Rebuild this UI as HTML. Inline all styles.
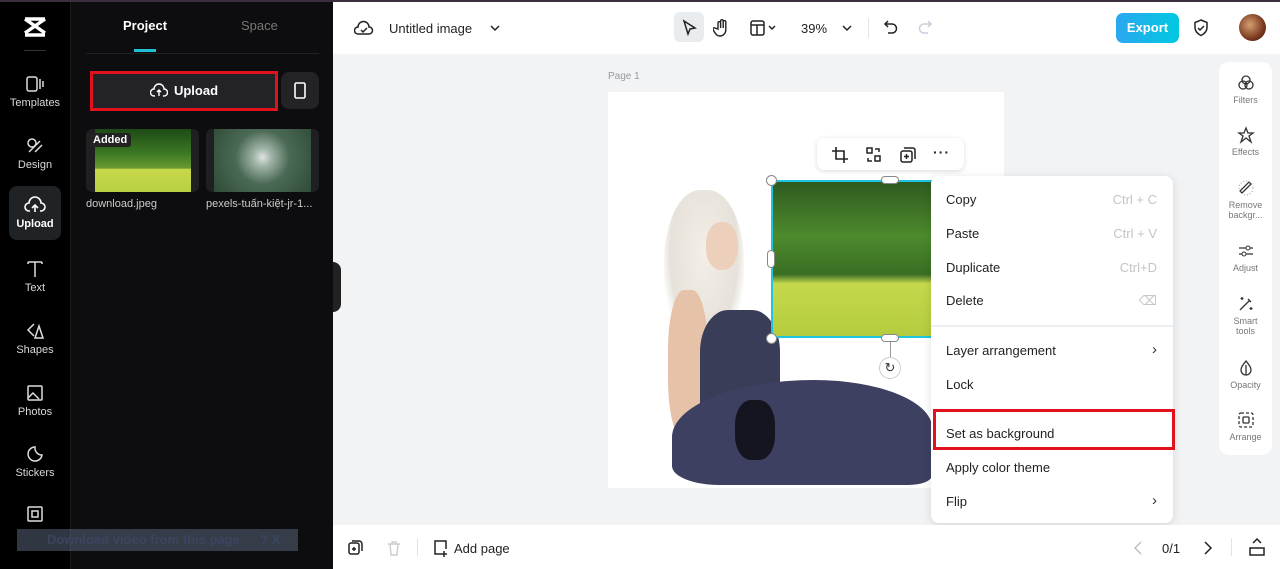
<!DOCTYPE html>
<html><head><meta charset="utf-8"><style>
*{margin:0;padding:0;box-sizing:border-box}
body{width:1280px;height:569px;overflow:hidden;font-family:"Liberation Sans",sans-serif;background:#f1f3f5;position:relative}
.a{position:absolute}
.rail{left:0;top:0;width:71px;height:569px;background:#000;border-right:1px solid #1c1c1e}
.ri{position:absolute;left:0;width:70px;text-align:center;color:#d8d8d8;font-size:11px}
.ri svg{display:block;margin:0 auto 3px}
.panel{left:71px;top:0;width:262px;height:569px;background:#0d0d0f}
.menu{left:931px;top:176px;width:242px;height:347px;background:#fff;border-radius:8px;box-shadow:0 2px 10px rgba(0,0,0,.12)}
.mi{position:absolute;left:15px;font-size:13px;color:#222}
.sc{position:absolute;right:16px;font-size:13px;color:#c4c4c4}
.rp{left:1219px;top:62px;width:53px;height:393px;background:#fff;border-radius:10px}
.rt{position:absolute;left:0;width:53px;text-align:center;font-size:9px;color:#777;line-height:10px}
.rt svg{display:block;margin:0 auto 3px}
</style></head><body>
<div class="a" style="left:0;top:0;width:1280px;height:2px;background:#3b2f3f;z-index:5"></div>
<div class="a rail">
 <div class="ri" style="top:16px"><svg width="26" height="22" viewBox="0 0 26 22"><path d="M3 3 L23 17 M23 3 L3 17 M3 3h20M3 19h20" stroke="#fff" stroke-width="3.5" fill="none"/></svg></div>
 <div class="a" style="left:24px;top:50px;width:22px;height:1px;background:#333"></div>
 <div class="ri" style="top:74px"><svg width="20" height="20"><rect x="2" y="3" width="10" height="14" rx="2" stroke="#ddd" stroke-width="1.5" fill="none"/><path d="M15 5v10M18 7v6" stroke="#ddd" stroke-width="1.5"/></svg>Templates</div>
 <div class="ri" style="top:136px"><svg width="20" height="20"><circle cx="7" cy="7" r="4" stroke="#ddd" stroke-width="1.5" fill="none"/><path d="M4 16 L15 5 M10 16 L17 9" stroke="#ddd" stroke-width="1.5"/></svg>Design</div>
 <div class="a" style="left:9px;top:186px;width:52px;height:54px;background:#1f2326;border-radius:8px"></div>
 <div class="ri" style="top:195px;color:#fff;font-weight:bold"><svg width="22" height="20"><path d="M6 16H5a4 4 0 0 1 0-8 6 6 0 0 1 12 0 4 4 0 0 1 0 8h-1M11 17V10M8 13l3-3 3 3" stroke="#fff" stroke-width="1.6" fill="none"/></svg>Upload</div>
 <div class="ri" style="top:259px"><svg width="20" height="20"><path d="M3 3h14M10 3v15M3 3v2M17 3v2" stroke="#ddd" stroke-width="1.5" fill="none"/></svg>Text</div>
 <div class="ri" style="top:321px"><svg width="20" height="20"><path d="M9 3 L3 9 L9 15M10 17L14 5 L18 17Z" stroke="#ddd" stroke-width="1.5" fill="none"/></svg>Shapes</div>
 <div class="ri" style="top:383px"><svg width="20" height="20"><rect x="3" y="3" width="14" height="14" rx="1" stroke="#ddd" stroke-width="1.5" fill="none"/><path d="M3 15l5-5 6 6" stroke="#ddd" stroke-width="1.5" fill="none"/></svg>Photos</div>
 <div class="ri" style="top:444px"><svg width="20" height="20"><path d="M10 3a7 7 0 1 0 7 8 7 7 0 0 1-7-8z" stroke="#ddd" stroke-width="1.5" fill="none"/></svg>Stickers</div>
 <div class="ri" style="top:504px"><svg width="20" height="20"><rect x="3" y="3" width="14" height="14" rx="1" stroke="#ddd" stroke-width="1.5" fill="none"/><rect x="7" y="7" width="6" height="6" stroke="#ddd" stroke-width="1.5" fill="none"/></svg></div>
</div>
<div class="a panel">
 <div class="a" style="left:52px;top:18px;color:#fff;font-weight:bold;font-size:13px">Project</div>
 <div class="a" style="left:170px;top:18px;color:#777;font-size:13px">Space</div>
 <div class="a" style="left:63px;top:49px;width:22px;height:3px;background:#22c0d8"></div>
 <div class="a" style="left:15px;top:53px;width:233px;height:1px;background:#222"></div>
 <div class="a" style="left:19px;top:71px;width:188px;height:40px;background:#232327;border:3px solid #e0131c;color:#fff;font-weight:bold;font-size:13px;text-align:center;line-height:34px"><svg width="18" height="14" style="vertical-align:-2px;margin-right:6px"><path d="M5 13H4a3.5 3.5 0 0 1 0-7 5 5 0 0 1 10 0 3.5 3.5 0 0 1 0 7h-1M9 13V7M7 9l2-2 2 2" stroke="#fff" stroke-width="1.4" fill="none"/></svg>Upload</div>
 <div class="a" style="left:210px;top:72px;width:38px;height:37px;background:#232327;border-radius:8px"><svg width="38" height="37"><rect x="14" y="11" width="10" height="15" rx="1.5" stroke="#fff" stroke-width="1.6" fill="none"/></svg></div>
 <div class="a" style="left:15px;top:129px;width:113px;height:63px;background:#1f1f22;border-radius:6px"></div>
 <div class="a" style="left:24px;top:129px;width:96px;height:63px;background:linear-gradient(#1e4a15 0%,#3e7a25 40%,#6a9a30 62%,#c8d84a 64%,#b8d040 100%)"></div>
 <div class="a" style="left:18px;top:133px;background:#222;color:#fff;font-size:11px;font-weight:bold;padding:1px 4px;border-radius:3px">Added</div>
 <div class="a" style="left:135px;top:129px;width:113px;height:63px;background:#1f1f22;border-radius:6px"></div>
 <div class="a" style="left:143px;top:129px;width:97px;height:63px;background:radial-gradient(circle at 50% 45%,#dfe5e0 0,#a0b4a8 15%,#4b6a55 45%,#2e4a38 100%)"></div>
 <div class="a" style="left:15px;top:198px;color:#ccc;font-size:11px">download.jpeg</div>
 <div class="a" style="left:135px;top:198px;color:#ccc;font-size:11px">pexels-tuấn-kiệt-jr-1...</div>
</div>
<div class="a" style="left:333px;top:262px;width:8px;height:50px;background:#222;border-radius:0 8px 8px 0"></div>
<div class="a" style="left:17px;top:529px;width:281px;height:22px;background:rgba(90,100,120,.55);color:#3a4660;font-weight:bold;font-size:13px;line-height:22px;padding-left:30px">Download video from this page<span style="margin-left:20px">? X</span></div>
<!-- top bar -->
<div class="a" style="left:333px;top:2px;width:947px;height:52px;background:#fff"></div>
<svg class="a" style="left:354px;top:19px" width="20" height="18"><path d="M5 15H4a3.5 3.5 0 0 1 0-7 5.5 5.5 0 0 1 11 0 3.5 3.5 0 0 1 0 7z M7 11l2 2 4-4" stroke="#222" stroke-width="1.5" fill="none"/></svg>
<div class="a" style="left:389px;top:21px;font-size:13px;color:#222">Untitled image</div>
<svg class="a" style="left:490px;top:24px" width="10" height="8"><path d="M1 2l4 4 4-4" stroke="#222" stroke-width="1.5" fill="none"/></svg>
<div class="a" style="left:674px;top:12px;width:30px;height:30px;background:#e9ecef;border-radius:6px"></div>
<svg class="a" style="left:681px;top:19px" width="16" height="18"><path d="M3 2l11 7-5 1-2 5z" stroke="#222" stroke-width="1.5" fill="none"/></svg>
<svg class="a" style="left:713px;top:18px" width="18" height="20"><path d="M5 11V5a1.3 1.3 0 0 1 2.6 0v5V3a1.3 1.3 0 0 1 2.6 0v7V4a1.3 1.3 0 0 1 2.6 0v8a6 6 0 0 1-6 6c-3 0-4-2-6-5l-1-2a1.2 1.2 0 0 1 2-1z" stroke="#222" stroke-width="1.4" fill="none"/></svg>
<svg class="a" style="left:750px;top:19px" width="30" height="18"><rect x="1" y="2" width="13" height="14" rx="2" stroke="#222" stroke-width="1.5" fill="none"/><path d="M1 6h13M7 6v10M19 7l3 3 3-3" stroke="#222" stroke-width="1.5" fill="none"/></svg>
<div class="a" style="left:801px;top:21px;font-size:13px;color:#222">39%</div>
<svg class="a" style="left:842px;top:24px" width="10" height="8"><path d="M1 2l4 4 4-4" stroke="#222" stroke-width="1.5" fill="none"/></svg>
<div class="a" style="left:868px;top:18px;width:1px;height:20px;background:#e3e3e3"></div>
<svg class="a" style="left:883px;top:19px" width="16" height="18"><path d="M5 2L2 5l3 3M2 5h7a4.5 4.5 0 0 1 0 9H5" stroke="#222" stroke-width="1.5" fill="none"/></svg>
<svg class="a" style="left:917px;top:19px" width="16" height="18"><path d="M11 2l3 3-3 3M14 5H7a4.5 4.5 0 0 0 0 9h4" stroke="#ccd" stroke-width="1.5" fill="none"/></svg>
<div class="a" style="left:1116px;top:13px;width:63px;height:30px;border-radius:7px;background:linear-gradient(90deg,#2aa8f0,#00c8e0);color:#fff;font-weight:bold;font-size:13px;text-align:center;line-height:30px">Export</div>
<svg class="a" style="left:1192px;top:18px" width="18" height="20"><path d="M9 2l6 2.5v5c0 4-3 6.5-6 8-3-1.5-6-4-6-8v-5z M6 10l2 2 4-4" stroke="#222" stroke-width="1.5" fill="none"/></svg>
<div class="a" style="left:1239px;top:14px;width:27px;height:27px;border-radius:50%;background:radial-gradient(circle at 40% 40%,#d6a070,#7a3a20 60%,#3a1510)"></div>
<!-- canvas -->
<div class="a" style="left:608px;top:71px;font-size:10px;color:#999">Page 1</div>
<div class="a" style="left:608px;top:92px;width:396px;height:396px;background:#fff"></div>
<!-- woman -->
<div class="a" style="left:664px;top:190px;width:80px;height:160px;border-radius:45% 45% 30% 30%;background:radial-gradient(ellipse at 50% 40%,#f3efe8 0,#e6e2da 60%,rgba(255,255,255,0) 75%)"></div>
<div class="a" style="left:706px;top:222px;width:32px;height:48px;border-radius:45%;background:#ecd0bc"></div>
<div class="a" style="left:668px;top:290px;width:40px;height:150px;border-radius:40%;background:#e6c2a8"></div>
<div class="a" style="left:700px;top:310px;width:80px;height:120px;border-radius:35% 35% 20% 20%;background:#3a3d58"></div>
<div class="a" style="left:672px;top:380px;width:260px;height:105px;border-radius:60% 50% 10% 20%;background:#3d4060"></div>
<div class="a" style="left:735px;top:400px;width:40px;height:60px;border-radius:40%;background:#151520"></div>
<!-- selected image -->
<div class="a" style="left:771px;top:180px;width:162px;height:158px;border:2px solid #1fc4e0;background:linear-gradient(#2f5a20 0%,#4d8a2c 35%,#3a6e24 60%,#c6d84c 66%,#b4cc3e 100%)"></div>
<div class="a" style="left:766px;top:175px;width:11px;height:11px;border-radius:50%;background:#fff;border:1px solid #888"></div>
<div class="a" style="left:766px;top:333px;width:11px;height:11px;border-radius:50%;background:#fff;border:1px solid #888"></div>
<div class="a" style="left:881px;top:176px;width:18px;height:8px;border-radius:4px;background:#fff;border:1px solid #888"></div>
<div class="a" style="left:881px;top:334px;width:18px;height:8px;border-radius:4px;background:#fff;border:1px solid #888"></div>
<div class="a" style="left:767px;top:250px;width:8px;height:18px;border-radius:4px;background:#fff;border:1px solid #888"></div>
<div class="a" style="left:890px;top:342px;width:1px;height:16px;background:#999"></div>
<div class="a" style="left:879px;top:357px;width:22px;height:22px;border-radius:50%;background:#fff;border:1px solid #ccc;text-align:center;line-height:20px;font-size:13px;color:#333">↻</div>
<div class="a" style="left:817px;top:138px;width:147px;height:32px;background:#fff;border-radius:7px;box-shadow:0 1px 5px rgba(0,0,0,.15)">
 <svg class="a" style="left:14px;top:8px" width="18" height="18"><path d="M5 1v12h12M1 5h12v12" stroke="#222" stroke-width="1.6" fill="none"/></svg>
 <svg class="a" style="left:48px;top:8px" width="18" height="18"><rect x="2" y="2" width="5" height="5" stroke="#222" stroke-width="1.5" fill="none"/><rect x="10" y="10" width="5" height="5" stroke="#222" stroke-width="1.5" fill="none"/><path d="M10 3h4v3M7 15H3v-3" stroke="#222" stroke-width="1.5" fill="none"/></svg>
 <svg class="a" style="left:82px;top:8px" width="18" height="18"><rect x="2" y="5" width="11" height="11" rx="2" stroke="#222" stroke-width="1.5" fill="none"/><path d="M5 2h9a2 2 0 0 1 2 2v9M7.5 8v5M5 10.5h5" stroke="#222" stroke-width="1.5" fill="none"/></svg>
 <div class="a" style="left:116px;top:6px;font-size:14px;font-weight:bold;color:#222;letter-spacing:1px">···</div>
</div>
<!-- context menu -->
<div class="a menu">
 <div class="mi" style="top:16px">Copy</div><div class="sc" style="top:16px">Ctrl + C</div>
 <div class="mi" style="top:50px">Paste</div><div class="sc" style="top:50px">Ctrl + V</div>
 <div class="mi" style="top:84px">Duplicate</div><div class="sc" style="top:84px">Ctrl+D</div>
 <div class="mi" style="top:117px">Delete</div><div class="sc" style="top:117px">⌫</div>
 <div class="a" style="left:0;top:149px;width:242px;height:2px;background:#eceef0"></div>
 <div class="mi" style="top:167px">Layer arrangement</div><div class="sc" style="top:165px;color:#333;font-size:15px">›</div>
 <div class="mi" style="top:201px">Lock</div>
 <div class="mi" style="top:250px">Set as background</div>
 <div class="mi" style="top:284px">Apply color theme</div>
 <div class="mi" style="top:318px">Flip</div><div class="sc" style="top:316px;color:#333;font-size:15px">›</div>
</div>
<div class="a" style="left:933px;top:409px;width:242px;height:41px;border:3px solid #e0131c"></div>
<!-- right panel -->
<div class="a rp">
 <div class="rt" style="top:12px"><svg width="18" height="18"><circle cx="9" cy="6" r="4" stroke="#333" stroke-width="1.3" fill="none"/><circle cx="6" cy="11" r="4" stroke="#333" stroke-width="1.3" fill="none"/><circle cx="12" cy="11" r="4" stroke="#333" stroke-width="1.3" fill="none"/></svg>Filters</div>
 <div class="rt" style="top:64px"><svg width="18" height="18"><path d="M9 2l2 5h5l-4 3 2 6-5-4-5 4 2-6-4-3h5z" stroke="#333" stroke-width="1.3" fill="none"/></svg>Effects</div>
 <div class="rt" style="top:117px"><svg width="18" height="18"><path d="M5 14L14 5l-2-2-9 9z" stroke="#333" stroke-width="1.3" fill="none"/><circle cx="9" cy="9" r="7" stroke="#999" stroke-dasharray="1 2" fill="none"/></svg>Remove<br>backgr...</div>
 <div class="rt" style="top:180px"><svg width="18" height="18"><path d="M2 6h14M2 12h14" stroke="#333" stroke-width="1.3"/><circle cx="11" cy="6" r="2" fill="#fff" stroke="#333"/><circle cx="7" cy="12" r="2" fill="#fff" stroke="#333"/></svg>Adjust</div>
 <div class="rt" style="top:233px"><svg width="18" height="18"><path d="M3 15L13 5M11 4l3 3M5 2v3M3.5 3.5h3M14 12v3M12.5 13.5h3" stroke="#333" stroke-width="1.3"/></svg>Smart<br>tools</div>
 <div class="rt" style="top:297px"><svg width="18" height="18"><path d="M9 2c3 4 5 6 5 9a5 5 0 0 1-10 0c0-3 2-5 5-9zM9 6v10" stroke="#333" stroke-width="1.3" fill="none"/></svg>Opacity</div>
 <div class="rt" style="top:349px"><svg width="18" height="18"><rect x="2" y="2" width="14" height="14" rx="2" stroke="#333" stroke-width="1.3" stroke-dasharray="3 2" fill="none"/><rect x="6" y="6" width="6" height="6" rx="1" stroke="#333" stroke-width="1.3" fill="none"/></svg>Arrange</div>
</div>
<!-- bottom bar -->
<div class="a" style="left:333px;top:525px;width:947px;height:44px;background:#fff"></div>
<svg class="a" style="left:347px;top:539px" width="18" height="18"><rect x="2" y="4" width="10" height="11" rx="2" stroke="#222" stroke-width="1.5" fill="none"/><path d="M5 2h7a3 3 0 0 1 3 3v7M7 8v4M5 10h4" stroke="#222" stroke-width="1.5" fill="none"/></svg>
<svg class="a" style="left:385px;top:539px" width="18" height="18"><path d="M3 5h12M7 5V3h4v2M5 5l1 11h6l1-11" stroke="#ccc" stroke-width="1.4" fill="none"/></svg>
<div class="a" style="left:417px;top:538px;width:1px;height:18px;background:#e3e3e3"></div>
<svg class="a" style="left:432px;top:538px" width="18" height="20"><path d="M9 16H3V3h11v8M12 13v6M9 16h6" stroke="#222" stroke-width="1.5" fill="none"/></svg>
<div class="a" style="left:454px;top:541px;font-size:13px;color:#222">Add page</div>
<svg class="a" style="left:1133px;top:540px" width="10" height="16"><path d="M8 2L2 8l6 6" stroke="#bbb" stroke-width="1.4" fill="none"/></svg>
<div class="a" style="left:1162px;top:541px;font-size:13px;color:#222">0/1</div>
<svg class="a" style="left:1203px;top:540px" width="10" height="16"><path d="M2 2l6 6-6 6" stroke="#222" stroke-width="1.5" fill="none"/></svg>
<div class="a" style="left:1231px;top:538px;width:1px;height:18px;background:#e3e3e3"></div>
<svg class="a" style="left:1248px;top:537px" width="18" height="20"><path d="M2 11h14v7H2zM5 6l4-4 4 4" stroke="#222" stroke-width="1.5" fill="none"/></svg>
</body></html>
